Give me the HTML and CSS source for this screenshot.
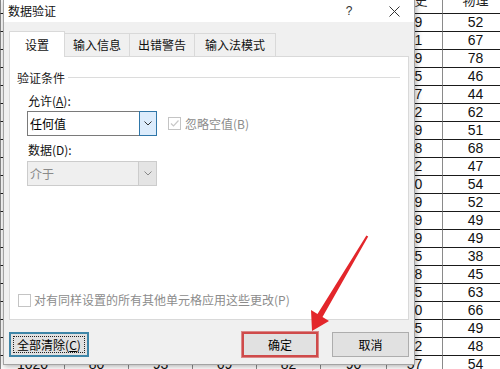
FILE: index.html
```html
<!DOCTYPE html>
<html lang="zh-CN">
<head>
    <meta charset="UTF-8">
    <meta name="viewport" content="width=device-width, initial-scale=1.0">
    <title>数据验证</title>
    <link rel="stylesheet" href="styles.css">
</head>
<body>
    <!-- worksheet behind the dialog -->
    <div class="sheet" id="sheet"></div>

    <div class="dialog">
        <div class="titlebar">
            <span class="title">数据验证</span>
            <span class="help">?</span>
            <span class="close">
                <svg width="11" height="11" viewBox="0 0 11 11"><path d="M0.5 0.5 L10.5 10.5 M10.5 0.5 L0.5 10.5" stroke="#333" stroke-width="1" fill="none"/></svg>
            </span>
        </div>
        <div class="body">
            <div class="tabs">
                <div class="tab active">设置</div>
                <div class="tab">输入信息</div>
                <div class="tab">出错警告</div>
                <div class="tab wide">输入法模式</div>
            </div>
            <div class="panel">
                <div class="group-title"><span>验证条件</span><i class="rule"></i></div>

                <div class="field-label">允许(<u>A</u>):</div>
                <div class="row">
                    <div class="combo">
                        <span class="combo-text">任何值</span>
                        <span class="combo-btn hot">
                            <svg width="8" height="5" viewBox="0 0 8 5"><path d="M0.5 0.5 L4 4 L7.5 0.5" stroke="#333" fill="none"/></svg>
                        </span>
                    </div>
                    <label class="check disabled">
                        <span class="box">
                            <svg width="11" height="11" viewBox="0 0 11 11"><path d="M2 5.5 L4.5 8 L9.5 2.5" stroke="#c8c8c8" stroke-width="1.2" fill="none"/></svg>
                        </span>
                        忽略空值(B)
                    </label>
                </div>

                <div class="field-label second">数据(D):</div>
                <div class="combo disabled">
                    <span class="combo-text">介于</span>
                    <span class="combo-btn">
                        <svg width="8" height="5" viewBox="0 0 8 5"><path d="M0.5 0.5 L4 4 L7.5 0.5" stroke="#888" fill="none"/></svg>
                    </span>
                </div>

                <label class="check disabled apply">
                    <span class="box"></span>
                    对有同样设置的所有其他单元格应用这些更改(P)
                </label>
            </div>
            <div class="buttons">
                <button class="btn focused">全部清除(<u>C</u>)</button>
                <span class="spacer"></span>
                <button class="btn ok">确定</button>
                <button class="btn">取消</button>
            </div>
        </div>
    </div>

    <!-- red annotation arrow -->
    <svg class="arrow" width="500" height="369" viewBox="0 0 500 369">
        <polygon points="312,331 329,321 322.5,317 368.2,236.6 366.4,235.4 317.5,314 311,310" fill="#e3262b"/>
    </svg>

    <script>
        const headers = ["", "学号", "姓名", "语文", "数学", "英语", "地理", "历史", "物理", "化学"];
        const history = [59, 61, 59, 65, 57, 62, 69, 68, 72, 60, 59, 69, 79, 55, 68, 75, 60, 65, 72, 57];
        const physics = [52, 67, 78, 46, 44, 62, 51, 68, 47, 54, 52, 49, 49, 38, 45, 63, 66, 49, 48, 54];
        const sheet = document.getElementById("sheet");

        function addCell(text, cls) {
            let cell = document.createElement("div");
            cell.className = cls;
            cell.textContent = text;
            sheet.appendChild(cell);
        }

        headers.forEach(h => addCell(h, "cell hd"));
        for (let i = 0; i < physics.length; i++) {
            addCell("", "cell");
            addCell(String(1001 + i), "cell");
            for (let c = 0; c < 4; c++) {
                addCell(String(58 + (i * 7 + c * 13) % 37), "cell");
            }
            addCell(String(61 + (i * 11) % 30), "cell");
            addCell(String(history[i]), "cell");
            addCell(String(physics[i]), "cell");
            addCell(String(55 + (i * 5) % 40), "cell");
        }
    </script>
</body>
</html>
```

FILE: styles.css
```css
* {
    margin: 0;
    padding: 0;
    box-sizing: border-box;
}

body {
    position: relative;
    width: 500px;
    height: 369px;
    overflow: hidden;
    background: #fff;
    color: #000;
    font-family: "Noto Sans CJK SC", sans-serif;
    font-size: 12px;
}

/* Worksheet */
.sheet {
    display: grid;
    grid-template-columns: 41px 64px 64px 64px 64px 64px 66px 56px 66px 60px;
    grid-template-rows: 23px;
    grid-auto-rows: 18px;
    width: max-content;
    margin: -9px 0 0 -40px;
}

.cell {
    border-right: 1px solid #8a8a8a;
    border-bottom: 1px solid #1a1a1a;
    font: 14px/17px "Liberation Sans", Arial, sans-serif;
    color: #111;
    text-align: center;
}

.cell.hd {
    font-family: "Noto Sans CJK SC", sans-serif;
    font-size: 13px;
    line-height: 18px;
    color: #222;
}

/* Dialog */
.dialog {
    position: absolute;
    left: 3px;
    top: -1px;
    width: 412px;
    height: 366px;
    border: 1px solid #a3a3a3;
    background: #f0f0f0;
    box-shadow: 1px 1px 6px rgba(0, 0, 0, 0.35);
    display: flex;
    flex-direction: column;
}

.titlebar {
    height: 22px;
    background: #fff;
    display: flex;
    align-items: center;
    padding-left: 4px;
    line-height: 18px;
}

.title {
    flex: 1;
    color: #111;
}

.help {
    width: 24px;
    margin-right: 13px;
    text-align: center;
    color: #333;
    font-family: "Liberation Sans", sans-serif;
}

.close {
    width: 40px;
    height: 22px;
    display: flex;
    align-items: center;
    justify-content: center;
}

.body {
    flex: 1;
    padding: 9px 5px 0 5px;
    display: flex;
    flex-direction: column;
}

/* Tabs */
.tabs {
    height: 25px;
    display: flex;
    align-items: flex-end;
}

.tab {
    width: 66px;
    height: 23px;
    margin-left: -1px;
    border: 1px solid #d9d9d9;
    border-bottom: none;
    background: #f0f0f0;
    text-align: center;
    line-height: 22px;
    color: #111;
}

.tab.wide {
    width: 82px;
}

.tab.active {
    position: relative;
    z-index: 1;
    width: 56px;
    height: 26px;
    margin-left: 0;
    margin-bottom: -1px;
    background: #fff;
    line-height: 25px;
}

.panel {
    height: 264px;
    border: 1px solid #d9d9d9;
    background: #fff;
    display: flex;
    flex-direction: column;
    padding-right: 8px;
}

.group-title {
    display: flex;
    align-items: center;
    height: 16px;
    margin: 12px 0 0 7px;
    color: #222;
}

.rule {
    flex: 1;
    height: 1px;
    margin-left: 3px;
    background: #dcdcdc;
}

.field-label {
    margin: 8px 0 0 18px;
    line-height: 16px;
    color: #111;
}

.field-label.second {
    margin-top: 6px;
}

.row {
    display: flex;
    align-items: center;
    margin: 2px 0 0 17px;
}

/* Combo boxes */
.combo {
    width: 130px;
    height: 25px;
    border: 1px solid #7a7a7a;
    background: #fff;
    display: flex;
}

.panel > .combo {
    margin: 3px 0 0 17px;
}

.combo-text {
    flex: 1;
    padding-left: 2px;
    line-height: 23px;
}

.combo-btn {
    width: 18px;
    display: flex;
    align-items: center;
    justify-content: center;
    border-left: 1px solid #cfcfcf;
}

.combo-btn.hot {
    margin: -1px -1px -1px 0;
    border: 1px solid #2f76a8;
    background: #dcecfc;
}

.combo.disabled {
    border-color: #cccccc;
    background: #efefef;
    color: #8a8a8a;
}

.combo.disabled .combo-btn {
    background: #e4e4e4;
    border-left-color: #cccccc;
}

/* Check boxes */
.check {
    display: flex;
    align-items: center;
    line-height: 16px;
}

.check .box {
    width: 13px;
    height: 13px;
    margin-right: 4px;
    border: 1px solid #c4c4c4;
    background: #fff;
    display: flex;
    align-items: center;
    justify-content: center;
}

.row .check {
    margin-left: 11px;
}

.check.disabled {
    color: #8c8c8c;
}

.check.apply {
    margin: auto 0 11px 8px;
}

.check.apply .box {
    margin-right: 3px;
}

/* Buttons */
.buttons {
    display: flex;
    height: 25px;
    margin-top: 12px;
}

.spacer {
    flex: 1;
}

.btn {
    width: 77px;
    height: 25px;
    border: 1px solid #adadad;
    background: #e1e1e1;
    font-family: "Noto Sans CJK SC", sans-serif;
    font-size: 12px;
    color: #000;
}

.btn.focused {
    width: 80px;
    border: 2px solid #3f86a8;
    outline: 1px dotted #222;
    outline-offset: -5px;
}

.btn.ok {
    width: 76px;
    margin-right: 14px;
    border: 2px solid #cf4a4a;
    box-shadow: 0 0 0 1px rgba(214, 110, 110, 0.8);
}

/* Annotation */
.arrow {
    position: absolute;
    left: 0;
    top: 0;
    pointer-events: none;
}
```
